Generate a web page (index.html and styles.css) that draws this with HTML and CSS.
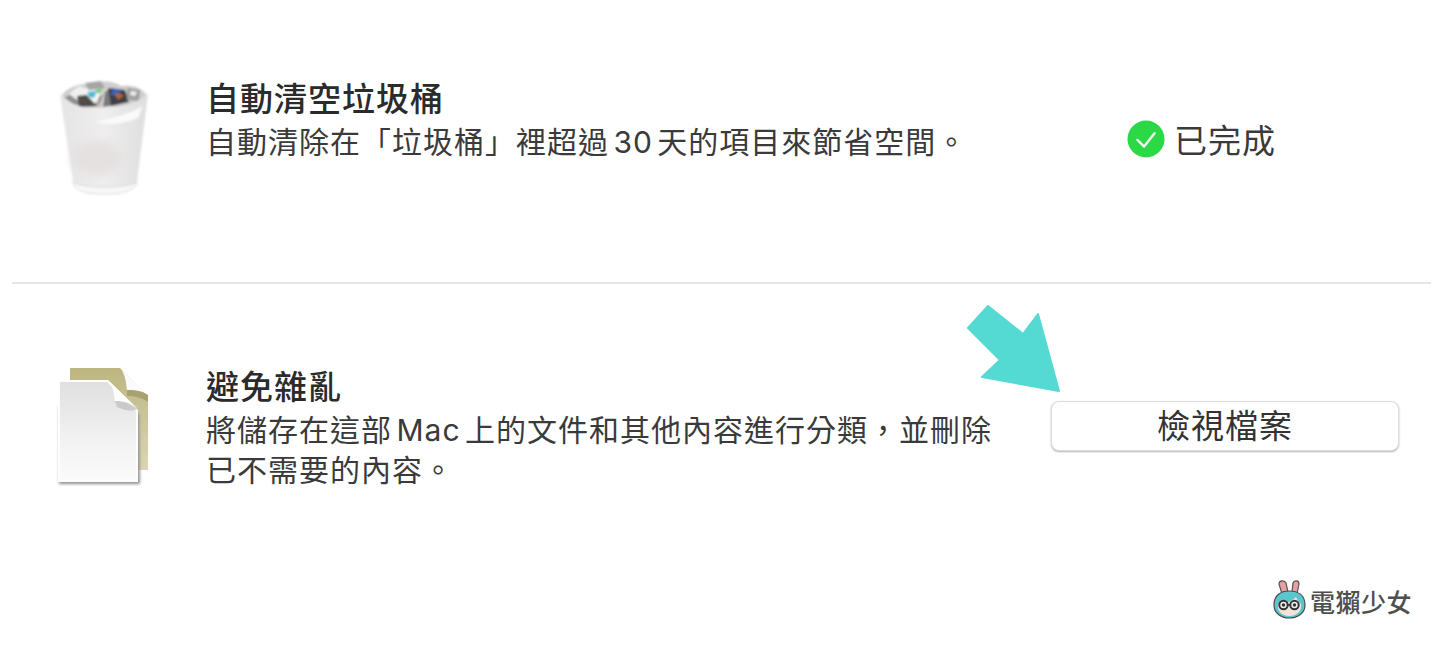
FILE: index.html
```html
<!DOCTYPE html>
<html lang="zh-Hant">
<head>
  <meta charset="UTF-8">
  <title>儲存空間建議</title>
  <link rel="stylesheet" href="styles.css">
</head>
<body>
  <div class="list">
    <div class="row row-first">
      <svg class="icon" viewBox="0 0 100 124" width="100" height="124">
        <defs>
          <linearGradient id="bin" x1="0" y1="0" x2="1" y2="0">
            <stop offset="0" stop-color="#e4e4e4"/>
            <stop offset="0.5" stop-color="#efeeee"/>
            <stop offset="1" stop-color="#dedede"/>
          </linearGradient>
          <filter id="soft"><feGaussianBlur stdDeviation="0.9"/></filter>
          <filter id="softer"><feGaussianBlur stdDeviation="4"/></filter>
        </defs>
        <g filter="url(#soft)">
          <path d="M7 17 C14 8 26 5 38 6 C46 2 60 3 66 8 C76 6 88 10 92 18 L90 30 L10 30 Z" fill="#cfcfcf"/>
          <path d="M9 20 L20 14 L24 27 L12 26 Z" fill="#8e8e8e"/>
          <path d="M14 16 L24 8 L36 12 L22 22 Z" fill="#f0f0f0"/>
          <path d="M30 5 L46 3 L50 10 L34 12 Z" fill="#a5a5a5"/>
          <path d="M22 18 L40 16 L42 28 L24 29 Z" fill="#4f4b49"/>
          <path d="M28 13 L48 11 L40 26 Z" fill="#f6f6f6"/>
          <path d="M32 14 L42 13 L39 20 L34 19 Z" fill="#4bbcd6"/>
          <path d="M40 12 L48 11 L44 16 Z" fill="#68c858"/>
          <path d="M44 20 L48 16 L43 30 Z" fill="#8a6a58"/>
          <path d="M50 14 L56 10 L56 28 L48 29 Z" fill="#7a7a7a"/>
          <path d="M53 10 L70 12 L74 24 L56 28 Z" fill="#3e3f46"/>
          <path d="M57 10 L66 12 L64 19 L56 17 Z" fill="#3a62aa"/>
          <path d="M60 15 L69 17 L63 22 Z" fill="#bb6530"/>
          <path d="M72 10 L85 12 L84 23 L72 22 Z" fill="#a0a0a0"/>
          <path d="M76 13 L82 14 L80 18 L75 17 Z" fill="#f0f0f0"/>
          <path d="M5 16 C12 22 20 29 34 30 C46 32 50 27 60 29 C70 29 84 24 93 15 L82 104 C80 114 66 116 49 116 C32 116 20 114 18 104 Z" fill="url(#bin)"/>
          <path d="M40 44 C58 40 74 36 88 28 L83 40 C68 46 54 48 40 44 Z" fill="#fafafa"/>
          <ellipse cx="42" cy="80" rx="26" ry="18" fill="#e5e1e1" filter="url(#softer)"/>
          <path d="M18 104 C20 114 32 116 49 116 C66 116 80 114 82 104 C74 111 26 111 18 104 Z" fill="#f8f8f8" stroke="#d4d4d4" stroke-width="0.8"/>
        </g>
      </svg>
      <div class="text">
        <h2>自動清空垃圾桶</h2>
        <p>自動清除在「垃圾桶」裡超過 30 天的項目來節省空間。</p>
      </div>
      <div class="side side-status">
        <svg class="check" viewBox="0 0 40 40" width="38" height="38">
          <circle cx="20" cy="20" r="19.5" fill="#2bd845"/>
          <path d="M11 21 L18 28 L29 14" fill="none" stroke="#eafbe9" stroke-width="2.6" stroke-linecap="round" stroke-linejoin="round"/>
        </svg>
        <span>已完成</span>
      </div>
    </div>
    <div class="row row-second">
      <svg class="icon" viewBox="0 0 100 124" width="100" height="124">
        <defs>
          <linearGradient id="sheet" x1="0" y1="0" x2="0" y2="1">
            <stop offset="0" stop-color="#e0e0e0"/>
            <stop offset="0.6" stop-color="#f2f2f2"/>
            <stop offset="1" stop-color="#fbfbfb"/>
          </linearGradient>
          <linearGradient id="back" x1="0" y1="0" x2="0" y2="1">
            <stop offset="0" stop-color="#bdb681"/>
            <stop offset="1" stop-color="#d9d7b4"/>
          </linearGradient>
          <filter id="soft2"><feGaussianBlur stdDeviation="0.6"/></filter>
          <filter id="shadow"><feGaussianBlur stdDeviation="1.6"/></filter>
        </defs>
        <g filter="url(#soft2)">
          <path d="M15 2 L65 2 L93 30 L93 104 L60 104 L15 60 Z" fill="url(#back)"/>
          <path d="M66 3 C71 10 71 18 72 24 C80 24 87 25 92 28 Z" fill="#fbfbfb"/>
          <path d="M72 24 C80 24 87 25 93 29 L93 36 C86 31 78 30 72 30 Z" fill="#a8a26f"/>
          <path d="M4 40 L84 48 L85 118 L4 118 Z" fill="#8f8f8f" filter="url(#shadow)"/>
          <path d="M3 14 L53 14 L83 44 L83 116 L3 116 Z" fill="#fdfdfd"/>
          <path d="M5 16 L52 16 L81 45 L81 114 L5 114 Z" fill="url(#sheet)"/>
          <path d="M53 14 C59 20 59 30 60 35 C68 35 76 37 83 43 Z" fill="#fdfdfd"/>
          <path d="M60 35 C68 35 76 37 82 43 C76 46 68 44 62 41 Z" fill="#bdbdbd" opacity="0.7"/>
        </g>
      </svg>
      <div class="text">
        <h2>避免雜亂</h2>
        <p>將儲存在這部 Mac 上的文件和其他內容進行分類&#xFF0C;並刪除已不需要的內容。</p>
      </div>
      <div class="side">
        <svg class="arrow" viewBox="0 0 94 88" width="94" height="88">
          <path d="M21 1 L1 23 L33 55 L15 72 L92 86 L71 9 L56 29 Z" fill="#55d9d3" stroke="#55d9d3" stroke-width="2" stroke-linejoin="round"/>
        </svg>
        <button class="view">檢視檔案</button>
      </div>
    </div>
  </div>

  <div class="brand">
    <svg class="mascot" viewBox="0 0 34 40" width="34" height="40">
      <path d="M9 14 L6 4 C6 0 12 0 13 3 L15 12 Z M19 12 L20 3 C21 0 26 0 26 4 L24 14 Z" fill="#e8a0a5" stroke="#555" stroke-width="1.2"/>
      <path d="M1 25 C1 15 8 11 16 11 C25 11 32 15 32 25 C32 33 25 38 16 38 C8 38 1 33 1 25 Z" fill="#5cc6ce" stroke="#4a4a4a" stroke-width="1.2"/>
      <path d="M5 24 C11 24 18 22 23 17 C24 20 26 22 28 24 C29 32 23 36 16 36 C9 36 4 31 5 24 Z" fill="#f4e4da"/>
      <circle cx="10.5" cy="25" r="4.2" fill="#eee" stroke="#333" stroke-width="2"/>
      <circle cx="21.5" cy="25" r="4.2" fill="#eee" stroke="#333" stroke-width="2"/>
      <path d="M14.5 25 L17.5 25" stroke="#333" stroke-width="1.6"/>
      <circle cx="10.5" cy="25" r="1.7" fill="#333"/>
      <circle cx="21.5" cy="25" r="1.7" fill="#333"/>
    </svg>
    <span>電獺少女</span>
  </div>
</body>
</html>
```

FILE: styles.css
```css
body {
  margin: 0;
  height: 645px;
  overflow: hidden;
  background: #ffffff;
  color: #333;
  font-family: "Inter", "Noto Sans CJK TC", sans-serif;
}
.list {
  padding: 0 9px 0 12px;
}
.row {
  display: flex;
  align-items: flex-start;
}
.row-first {
  height: 205px;
  padding-top: 77px;
  border-bottom: 2px solid #e6e6e6;
}
.row-second {
  padding-top: 81px;
}
.icon {
  flex: none;
  margin: 0 51px 0 43px;
}
.row-first .icon {
  margin-top: 1px;
}
.row-second .icon {
  margin-top: 1px;
}
.text {
  width: 791px;
  flex: none;
}
.text h2 {
  margin: 0;
  font-size: 33px;
  line-height: 44px;
  font-weight: 500;
  letter-spacing: 1px;
  color: #2b2b2b;
}
.text p {
  margin: 1px 0 0;
  font-size: 30px;
  line-height: 40px;
  letter-spacing: 1px;
  word-spacing: -5px;
  color: #3a3a3a;
}
.side {
  position: relative;
  margin-left: 54px;
  flex: none;
  width: 348px;
}
.side-status {
  display: flex;
  align-items: center;
  gap: 9px;
  margin-left: 130px;
  width: auto;
  padding-top: 38px;
  font-size: 33px;
  letter-spacing: 1px;
  color: #3a3a3a;
}
.check {
  flex: none;
}
.view {
  display: block;
  width: 100%;
  height: 50px;
  margin-top: 36px;
  padding: 0;
  background: #fff;
  border: 1px solid #dcdcdc;
  border-radius: 8px;
  box-shadow: 0 1px 2px rgba(0, 0, 0, 0.3);
  font-family: inherit;
  font-size: 33px;
  line-height: 44px;
  letter-spacing: 1px;
  color: #333;
}
.arrow {
  position: absolute;
  left: -84px;
  top: -60px;
}
.brand {
  position: absolute;
  right: 28px;
  bottom: 19px;
  display: flex;
  align-items: center;
  gap: 3px;
  font-size: 25px;
  font-weight: 500;
  letter-spacing: 0.5px;
  line-height: 34px;
  color: #4f4f4f;
}
.mascot {
  margin-bottom: 6px;
}
```
